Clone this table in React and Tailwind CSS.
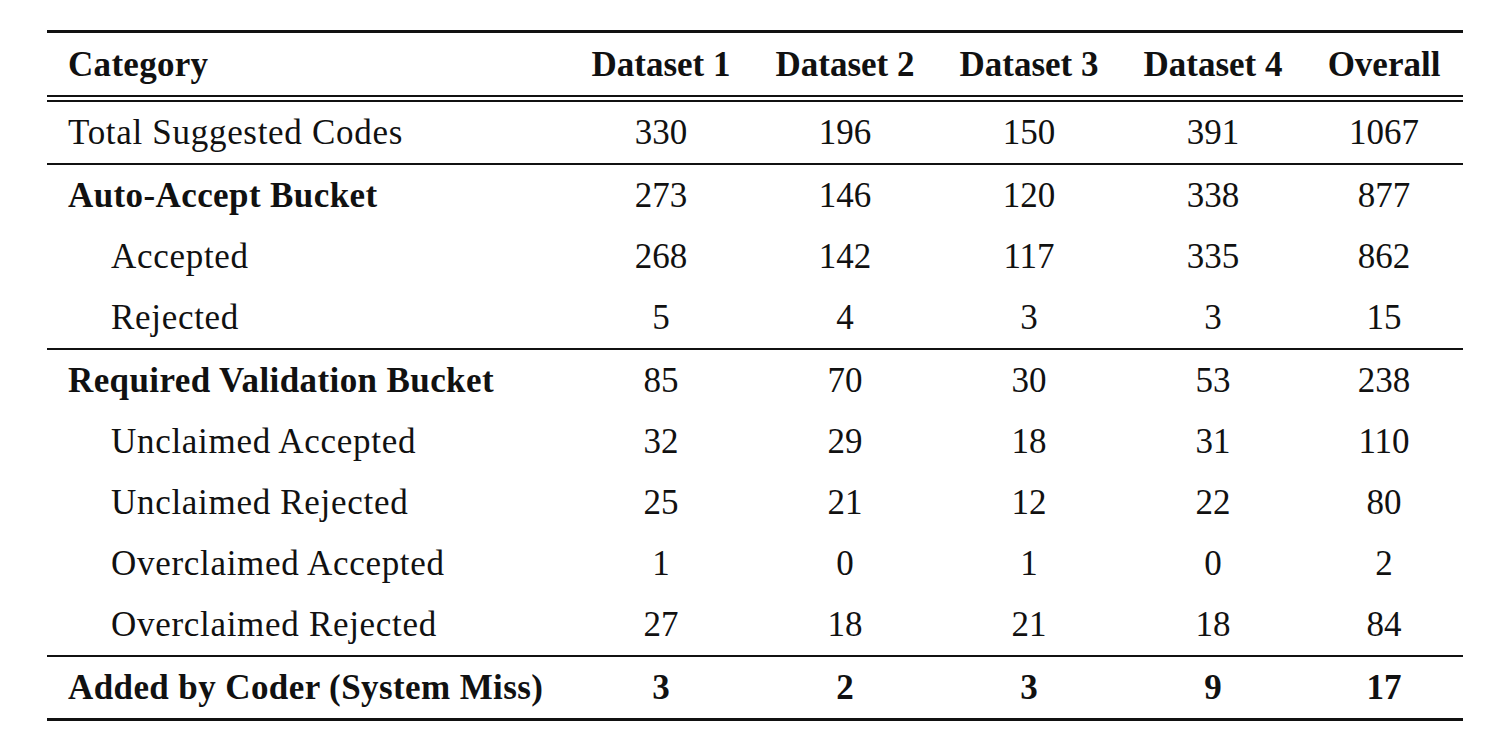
const cols = ['Dataset 1', 'Dataset 2', 'Dataset 3', 'Dataset 4', 'Overall'];

const groups = [
  [{ label: 'Total Suggested Codes', vals: [330, 196, 150, 391, 1067] }],
  [
    { label: 'Auto-Accept Bucket', vals: [273, 146, 120, 338, 877], bold: true },
    { label: 'Accepted', vals: [268, 142, 117, 335, 862], indent: true },
    { label: 'Rejected', vals: [5, 4, 3, 3, 15], indent: true },
  ],
  [
    { label: 'Required Validation Bucket', vals: [85, 70, 30, 53, 238], bold: true },
    { label: 'Unclaimed Accepted', vals: [32, 29, 18, 31, 110], indent: true },
    { label: 'Unclaimed Rejected', vals: [25, 21, 12, 22, 80], indent: true },
    { label: 'Overclaimed Accepted', vals: [1, 0, 1, 0, 2], indent: true },
    { label: 'Overclaimed Rejected', vals: [27, 18, 21, 18, 84], indent: true },
  ],
  [{ label: 'Added by Coder (System Miss)', vals: [3, 2, 3, 9, 17], bold: true, allBold: true }],
];

const grid = 'grid grid-cols-[522px_184px_184px_184px_184px_158px] items-center';

function Row({ row }) {
  return (
    <div className={`${grid} h-[61px]`}>
      <div className={`${row.indent ? 'pl-[64px]' : 'pl-[21px]'} ${row.bold ? 'font-bold tracking-[0.4px]' : 'tracking-[0.7px]'}`}>
        {row.label}
      </div>
      {row.vals.map((v, i) => (
        <div key={i} className={`text-center ${row.allBold ? 'font-bold' : ''}`}>{v}</div>
      ))}
    </div>
  );
}

export default function App() {
  return (
    <div className="bg-white w-[1500px] h-[742px] pt-[30px] pl-[47px] text-[#111] text-[35px] leading-none font-['Liberation_Serif',serif]">
      <div className="w-[1416px] border-t-[3px] border-b-[3px] border-[#111]">
        <div className={`${grid} h-[69px] font-bold border-b-[7px] border-double border-[#111]`}>
          <div className="pl-[21px] tracking-[0.3px]">Category</div>
          {cols.map((c) => (
            <div key={c} className="text-center">{c}</div>
          ))}
        </div>
        <div>
          {groups[0].map((r) => (
            <Row key={r.label} row={r} />
          ))}
        </div>
        {groups.slice(1).map((g, gi) => (
          <div key={gi} className="border-t-2 border-[#111]">
            {g.map((r) => (
              <Row key={r.label} row={r} />
            ))}
          </div>
        ))}
      </div>
    </div>
  );
}
